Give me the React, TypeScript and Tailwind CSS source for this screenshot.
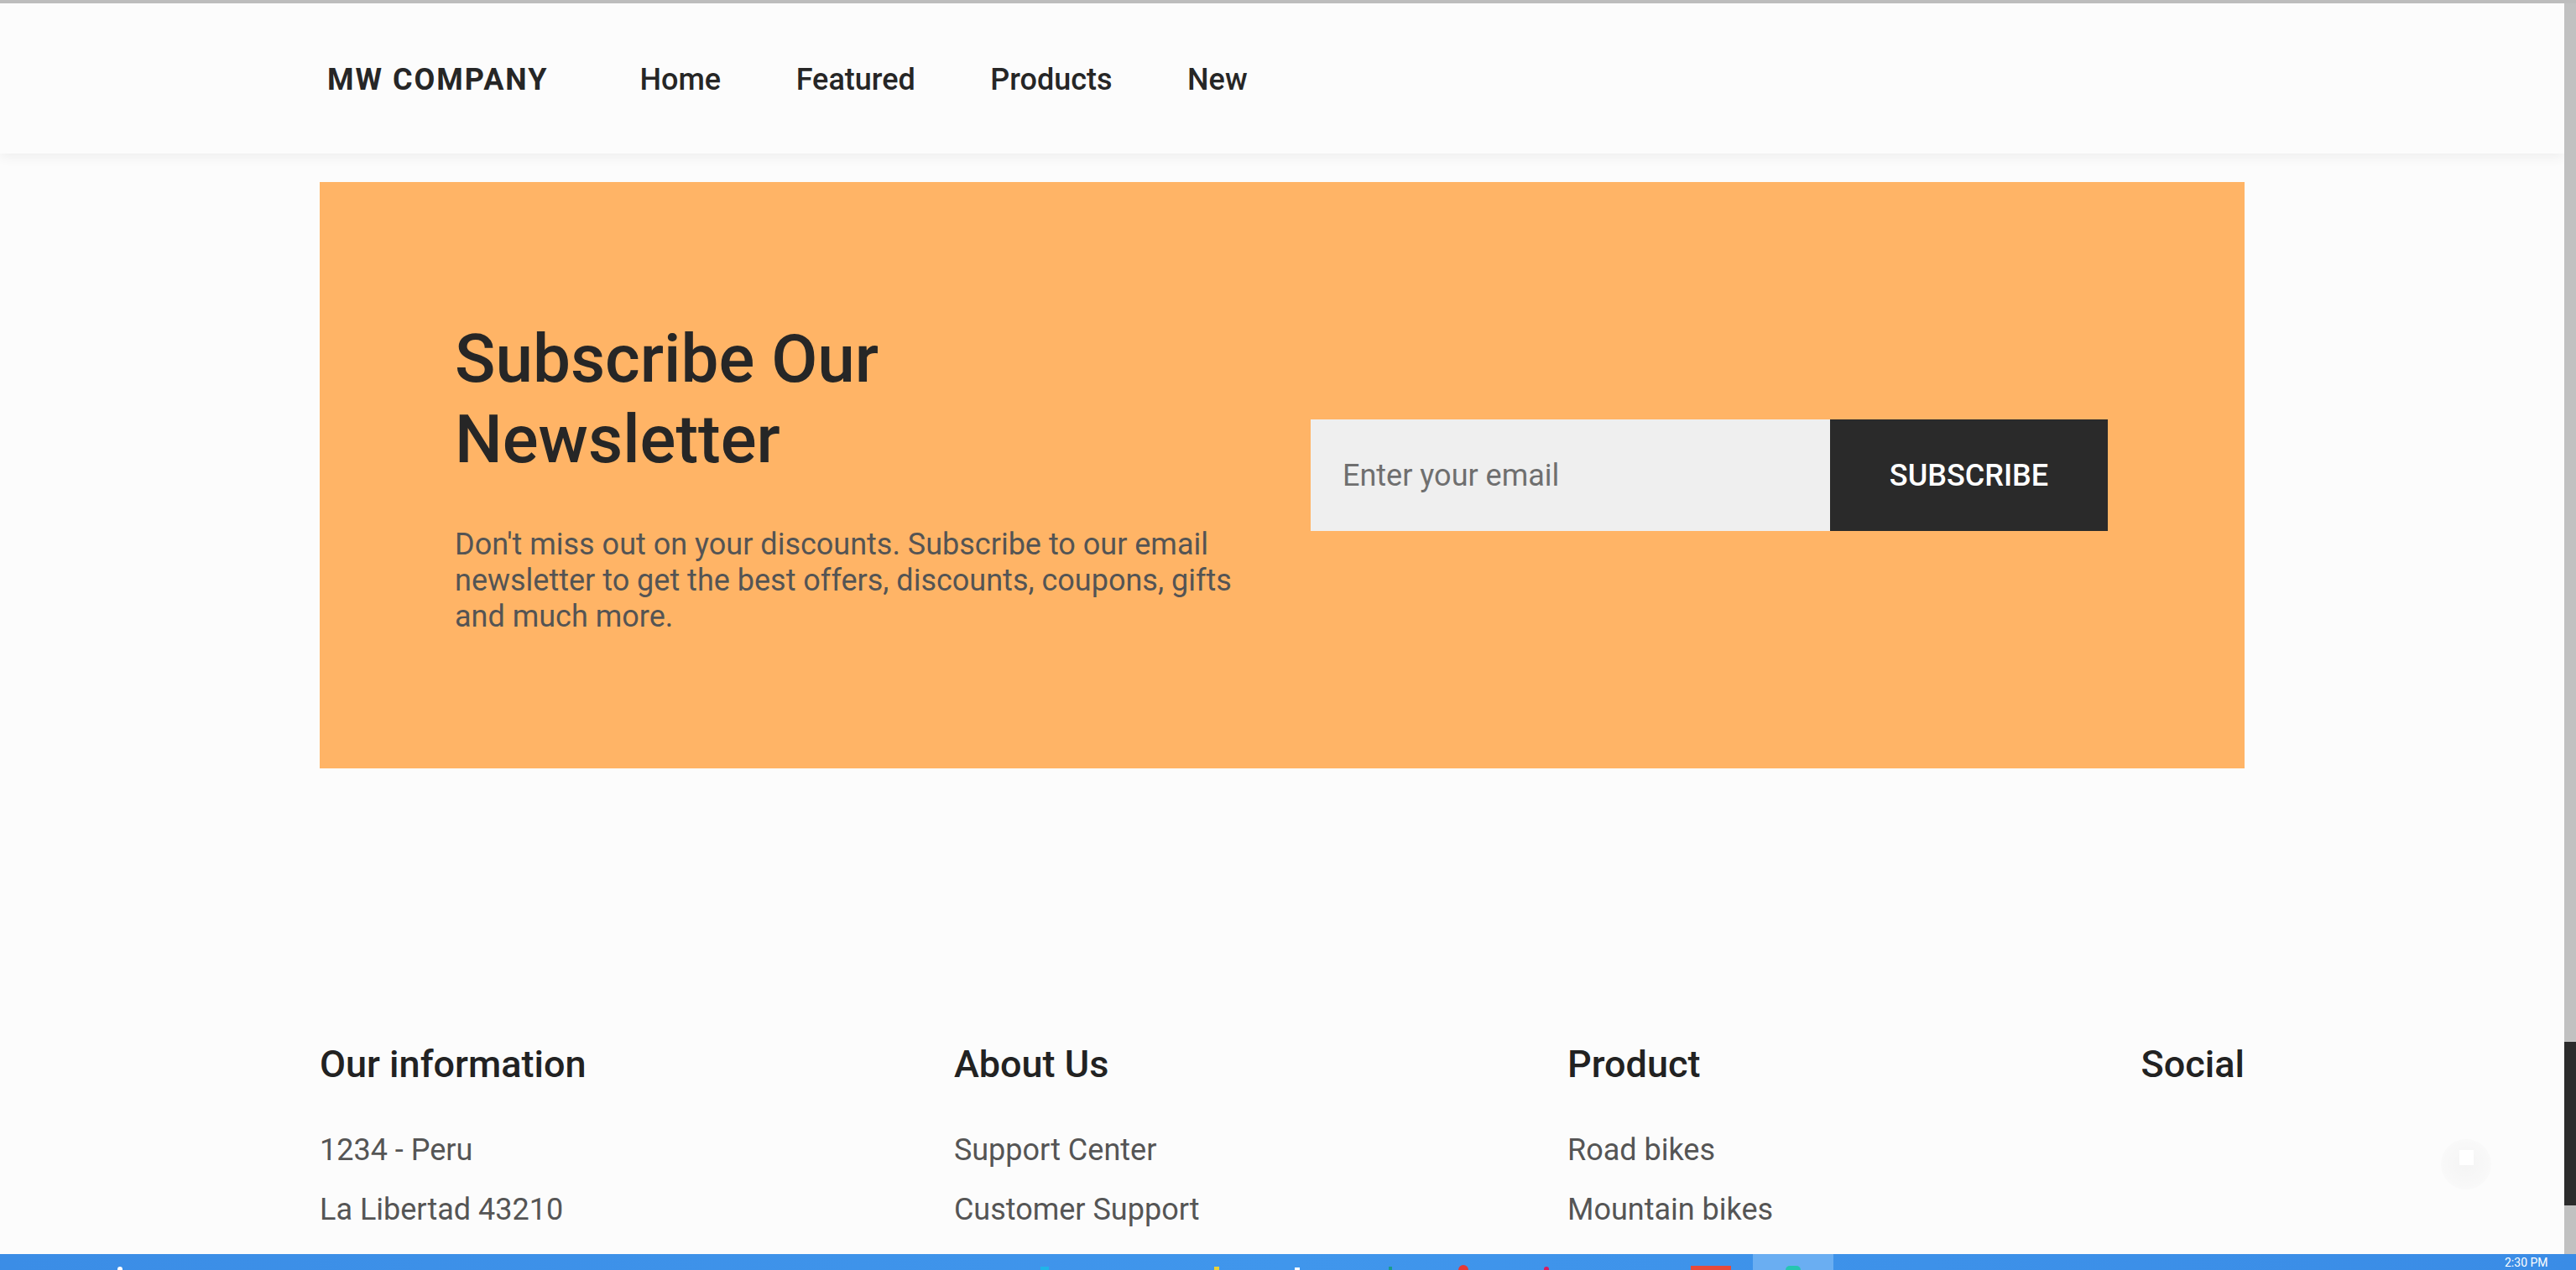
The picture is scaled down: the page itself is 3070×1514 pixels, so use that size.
import React from "react";

const navItems = ["Home", "Featured", "Products", "New"];

const footerCols: { title: string; items: string[] }[] = [
  { title: "Our information", items: ["1234 - Peru", "La Libertad 43210"] },
  { title: "About Us", items: ["Support Center", "Customer Support"] },
  { title: "Product", items: ["Road bikes", "Mountain bikes"] },
  { title: "Social", items: [] },
];

export default function App() {
  return (
    <div className="relative flex h-[1514px] w-full flex-col overflow-hidden bg-[#fcfcfc] [font-family:Roboto,'Liberation_Sans',sans-serif]">
      {/* browser top edge */}
      <div className="h-[4px] w-full shrink-0 bg-[#bdbdbd]" />

      <div className="flex min-h-0 flex-1">
        {/* page */}
        <div className="flex min-w-0 flex-1 flex-col overflow-hidden">
          <header className="relative z-10 h-[179px] shrink-0 bg-[#fcfcfc] shadow-[0_4px_14px_rgba(0,0,0,0.06)]">
            <div className="mx-auto flex h-full w-[2294px] items-center pl-[9px] pt-[2px]">
              <span className="text-[36px] font-bold tracking-[2px] text-[#262626]">MW COMPANY</span>
              <nav className="ml-[109px] flex items-center gap-[89.5px]">
                {navItems.map((n) => (
                  <a key={n} className="text-[36px] font-medium text-[#262626]">
                    {n}
                  </a>
                ))}
              </nav>
            </div>
          </header>

          <section className="mx-auto mt-[34px] flex h-[699px] w-[2294px] shrink-0 items-center gap-[68px] bg-[#ffb466] px-[161px]">
            <div className="flex-1 pt-[4px]">
              <h2 className="text-[80px] font-medium leading-[96px] text-[#262626]">
                Subscribe Our
                <br />
                Newsletter
              </h2>
              <p className="mt-[56px] text-[36px] leading-[43px] text-[#545454]">
                Don't miss out on your discounts. Subscribe to our email newsletter to get the best offers, discounts,
                coupons, gifts and much more.
              </p>
            </div>
            <div className="flex h-[133px] flex-1">
              <input
                type="text"
                placeholder="Enter your email"
                className="h-full w-[619px] bg-[#efefef] px-[38px] text-[36px] text-[#333] outline-none placeholder:text-[#6f6f6f]"
              />
              <button className="h-full w-[331px] bg-[#2a2a2a] text-[36px] font-medium text-white">SUBSCRIBE</button>
            </div>
          </section>

          <footer className="mx-auto mt-[326px] flex w-[2294px] shrink-0 justify-between">
            {footerCols.map((c) => (
              <div key={c.title} className="flex flex-col">
                <h3 className="text-[45px] font-medium leading-[54px] text-[#222]">{c.title}</h3>
                {c.items.length > 0 && (
                  <ul className="mt-[53px] flex flex-col gap-[27px]">
                    {c.items.map((i) => (
                      <li key={i} className="text-[36px] leading-[44px] text-[#555]">
                        {i}
                      </li>
                    ))}
                  </ul>
                )}
              </div>
            ))}
          </footer>
        </div>

        {/* scrollbar */}
        <div className="flex w-[14px] shrink-0 flex-col bg-[#c1c1c1]">
          <div className="mt-[1238px] h-[195px] w-full bg-[#2b2b2b]" />
        </div>
      </div>

      {/* taskbar */}
      <div className="relative h-[19px] w-full shrink-0 bg-gradient-to-r from-[#3b8de6] via-[#4096ec] to-[#3a8ce6]">
        <div className="absolute bottom-0 left-[140px] h-[4px] w-[6px] rounded-t-full bg-white" />
        <div className="absolute bottom-0 left-[1240px] h-[4px] w-[10px] bg-[#20b5e8]" />
        <div className="absolute bottom-0 left-[1447px] h-[4px] w-[6px] bg-[#e8d23a]" />
        <div className="absolute bottom-0 left-[1543px] h-[3px] w-[6px] bg-white" />
        <div className="absolute bottom-0 left-[1655px] h-[4px] w-[4px] bg-[#1a9c8c]" />
        <div className="absolute bottom-0 left-[1738px] h-[6px] w-[12px] rounded-t-full bg-[#e53935]" />
        <div className="absolute bottom-0 left-[1840px] h-[4px] w-[6px] rounded-t-full bg-[#d81b60]" />
        <div className="absolute bottom-0 left-[2015px] h-[5px] w-[48px] bg-[#e84a3a]" />
        <div className="absolute bottom-0 left-[2089px] h-[19px] w-[96px] bg-[#6aaef2]" />
        <div className="absolute bottom-0 left-[2128px] h-[5px] w-[18px] rounded-t-full bg-[#26c6b0]" />
        <div className="absolute left-[2985px] top-[3px] text-[14px] leading-[14px] text-white">2:30 PM</div>
      </div>

      {/* faint floating button */}
      <div className="absolute left-[2909px] top-[1358px] flex h-[60px] w-[60px] items-center justify-center rounded-full bg-[radial-gradient(circle,rgba(0,0,0,0.03)_0%,rgba(0,0,0,0.015)_60%,rgba(0,0,0,0)_100%)]">
        <div className="h-[18px] w-[17px] -translate-y-[8px] bg-white" />
      </div>
    </div>
  );
}
